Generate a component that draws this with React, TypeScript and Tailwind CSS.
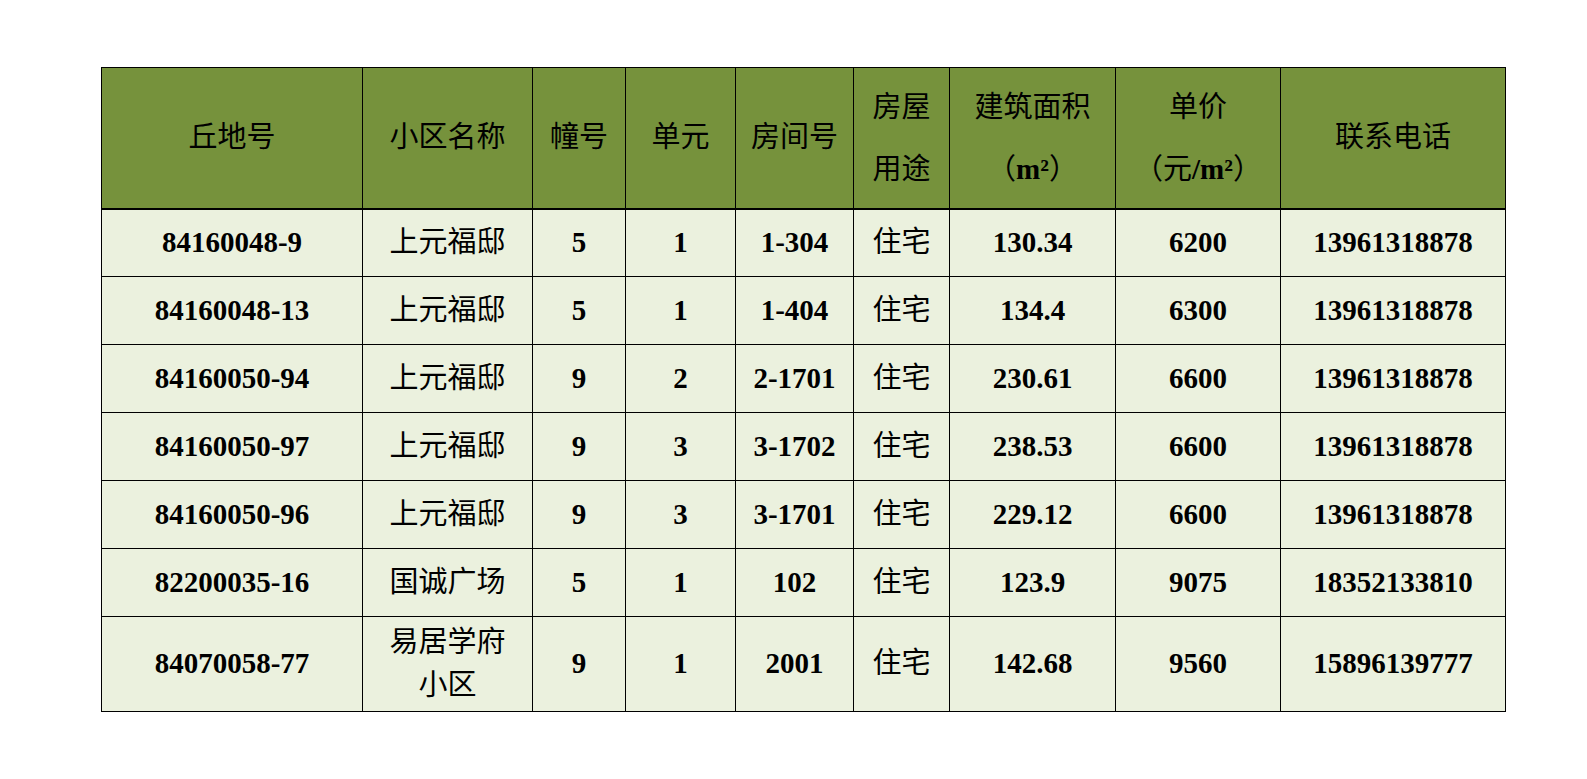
import React from 'react';

const rows = [
  { lot: '84160048-9', name: ['上元福邸'], bldg: '5', unit: '1', room: '1-304', use: '住宅', area: '130.34', price: '6200', phone: '13961318878' },
  { lot: '84160048-13', name: ['上元福邸'], bldg: '5', unit: '1', room: '1-404', use: '住宅', area: '134.4', price: '6300', phone: '13961318878' },
  { lot: '84160050-94', name: ['上元福邸'], bldg: '9', unit: '2', room: '2-1701', use: '住宅', area: '230.61', price: '6600', phone: '13961318878' },
  { lot: '84160050-97', name: ['上元福邸'], bldg: '9', unit: '3', room: '3-1702', use: '住宅', area: '238.53', price: '6600', phone: '13961318878' },
  { lot: '84160050-96', name: ['上元福邸'], bldg: '9', unit: '3', room: '3-1701', use: '住宅', area: '229.12', price: '6600', phone: '13961318878' },
  { lot: '82200035-16', name: ['国诚广场'], bldg: '5', unit: '1', room: '102', use: '住宅', area: '123.9', price: '9075', phone: '18352133810' },
  { lot: '84070058-77', name: ['易居学府', '小区'], bldg: '9', unit: '1', room: '2001', use: '住宅', area: '142.68', price: '9560', phone: '15896139777' },
];

const font = { fontFamily: '"Liberation Serif", "Noto Sans CJK SC", serif' };

function App() {
  return (
    <div className="min-h-screen bg-white pt-[67px] pl-[101px] text-black" style={font}>
      <table className="table-fixed border-collapse w-[1404px] text-[29px]">
        <colgroup>
          <col className="w-[261px]" />
          <col className="w-[170px]" />
          <col className="w-[93px]" />
          <col className="w-[110px]" />
          <col className="w-[118px]" />
          <col className="w-[96px]" />
          <col className="w-[166px]" />
          <col className="w-[165px]" />
          <col className="w-[225px]" />
        </colgroup>
        <thead>
          <tr className="h-[141px] bg-[#76923c]">
            {['丘地号', '小区名称', '幢号', '单元', '房间号'].map((h) => (
              <th key={h} className="border border-black border-b-white font-normal p-0 text-center">{h}</th>
            ))}
            <th className="border border-black border-b-white font-normal p-0 text-center leading-[62px]">
              <div>房屋</div>
              <div>用途</div>
            </th>
            <th className="border border-black border-b-white font-normal p-0 text-center leading-[62px]">
              <div>建筑面积</div>
              <div>（<span className="font-bold">m²</span>）</div>
            </th>
            <th className="border border-black border-b-white font-normal p-0 text-center leading-[62px]">
              <div>单价</div>
              <div>（元<span className="font-bold">/m²</span>）</div>
            </th>
            <th className="border border-black border-b-white font-normal p-0 text-center">联系电话</th>
          </tr>
        </thead>
        <tbody className="bg-[#ebf1de]">
          {rows.map((r, i) => (
            <tr key={r.lot} className={i === rows.length - 1 ? 'h-[95px]' : 'h-[68px]'}>
              <td className={`border border-black ${i === 0 ? 'border-t-2' : ''} p-0 text-center font-bold`}>{r.lot}</td>
              <td className={`border border-black ${i === 0 ? 'border-t-2' : ''} p-0 text-center leading-[43px]`}>
                {r.name.map((n) => (
                  <div key={n}>{n}</div>
                ))}
              </td>
              <td className={`border border-black ${i === 0 ? 'border-t-2' : ''} p-0 text-center font-bold`}>{r.bldg}</td>
              <td className={`border border-black ${i === 0 ? 'border-t-2' : ''} p-0 text-center font-bold`}>{r.unit}</td>
              <td className={`border border-black ${i === 0 ? 'border-t-2' : ''} p-0 text-center font-bold`}>{r.room}</td>
              <td className={`border border-black ${i === 0 ? 'border-t-2' : ''} p-0 text-center`}>{r.use}</td>
              <td className={`border border-black ${i === 0 ? 'border-t-2' : ''} p-0 text-center font-bold`}>{r.area}</td>
              <td className={`border border-black ${i === 0 ? 'border-t-2' : ''} p-0 text-center font-bold`}>{r.price}</td>
              <td className={`border border-black ${i === 0 ? 'border-t-2' : ''} p-0 text-center font-bold`}>{r.phone}</td>
            </tr>
          ))}
        </tbody>
      </table>
    </div>
  );
}

export default App;
